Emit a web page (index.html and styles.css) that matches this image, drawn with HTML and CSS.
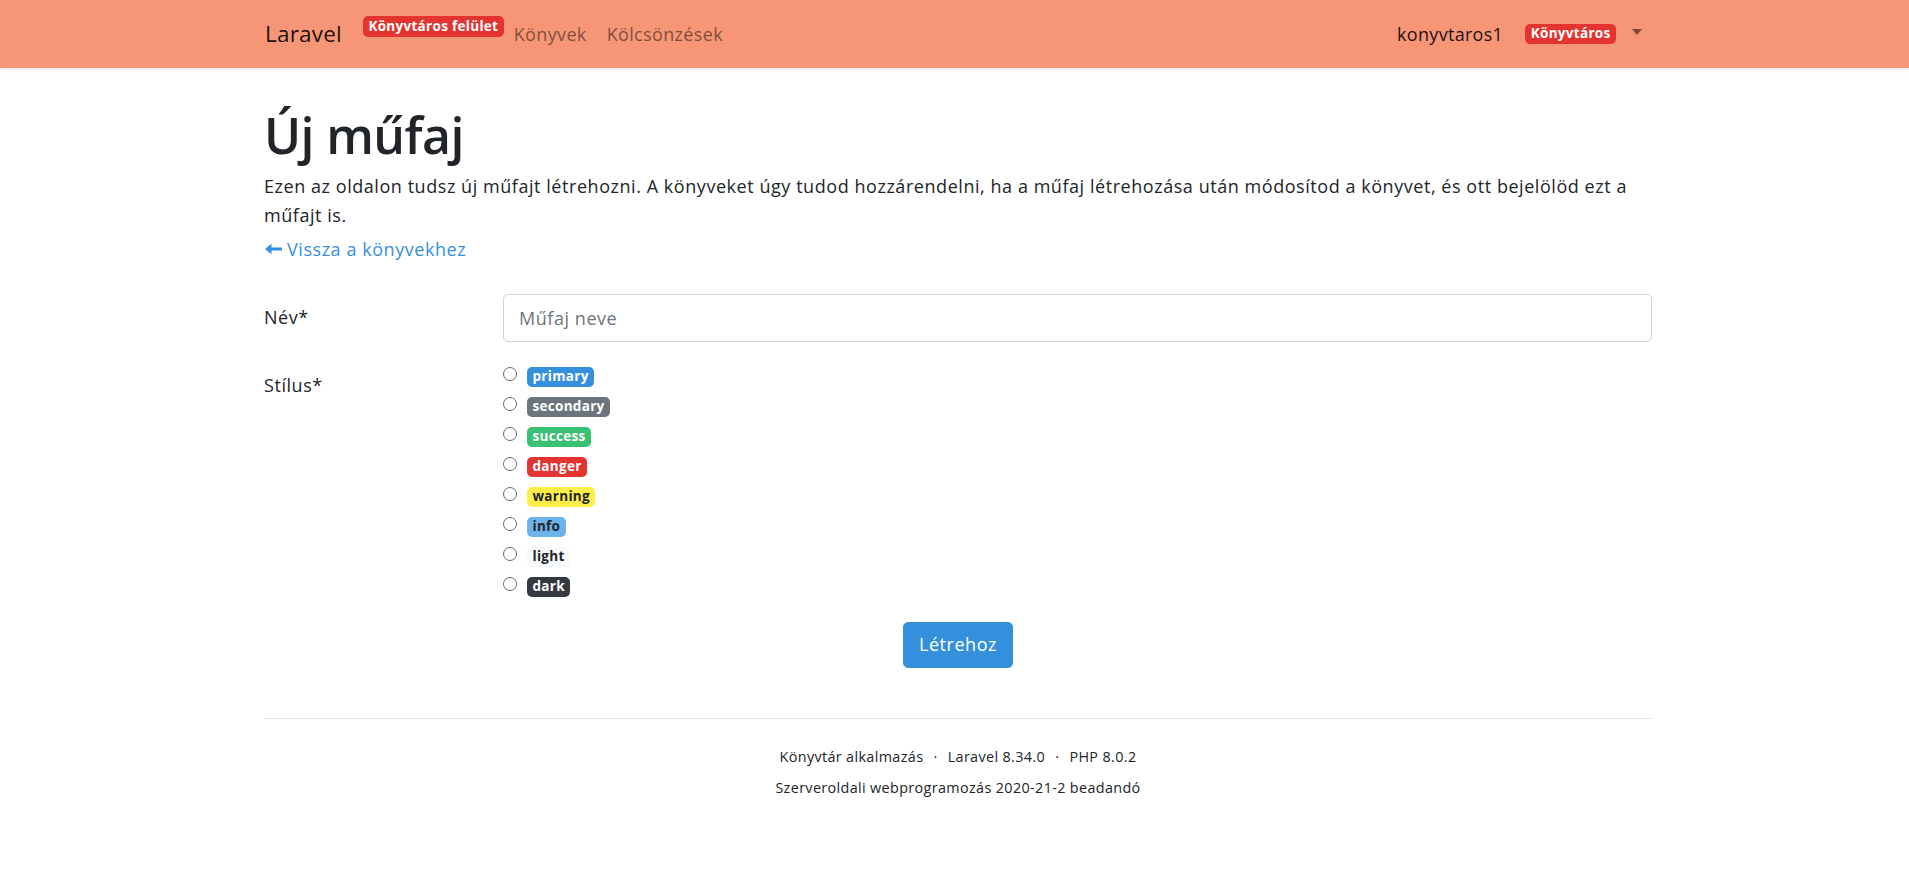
FILE: index.html
```html
<!DOCTYPE html>
<html lang="hu">
<head>
<meta charset="utf-8">
<title>Új műfaj</title>
<link rel="stylesheet" href="styles.css">
</head>
<body>
<nav class="navbar">
  <div class="container nav-inner">
    <a class="brand" href="#">Laravel</a>
    <span class="badge badge-danger nav-badge">Könyvtáros felület</span>
    <a class="nav-link" href="#">Könyvek</a>
    <a class="nav-link" href="#">Kölcsönzések</a>
    <div class="nav-right">
      <a class="nav-link user-link" href="#">konyvtaros1 <span class="badge badge-danger user-badge">Könyvtáros</span><span class="caret"></span></a>
    </div>
  </div>
</nav>
<main class="container main">
  <h1 class="title">Új műfaj</h1>
  <p class="lead-text">Ezen az oldalon tudsz új műfajt létrehozni. A könyveket úgy tudod hozzárendelni, ha a műfaj létrehozása után módosítod a könyvet, és ott bejelölöd ezt a műfajt is.</p>
  <a class="back-link" href="#"><svg class="back-icon" width="17" height="12" viewBox="0 0 17 12" aria-hidden="true"><path d="M0 6 L6.5 0.8 L6.5 4.5 L17 4.5 L17 7.5 L6.5 7.5 L6.5 11.2 Z" fill="#3490dc"/></svg>Vissza a könyvekhez</a>

  <form class="form">
    <div class="form-row">
      <label class="form-label" for="name">Név*</label>
      <input class="form-input" id="name" type="text" placeholder="Műfaj neve">
    </div>
    <div class="form-row">
      <div class="form-label">Stílus*</div>
      <div class="radio-list">
        <label class="radio-item"><input type="radio" name="style"><span class="badge badge-primary">primary</span></label>
        <label class="radio-item"><input type="radio" name="style"><span class="badge badge-secondary">secondary</span></label>
        <label class="radio-item"><input type="radio" name="style"><span class="badge badge-success">success</span></label>
        <label class="radio-item"><input type="radio" name="style"><span class="badge badge-danger">danger</span></label>
        <label class="radio-item"><input type="radio" name="style"><span class="badge badge-warning">warning</span></label>
        <label class="radio-item"><input type="radio" name="style"><span class="badge badge-info">info</span></label>
        <label class="radio-item"><input type="radio" name="style"><span class="badge badge-light">light</span></label>
        <label class="radio-item"><input type="radio" name="style"><span class="badge badge-dark">dark</span></label>
      </div>
    </div>
    <div class="submit-row">
      <button class="btn-primary" type="button">Létrehoz</button>
    </div>
  </form>

  <footer class="footer">
    <div class="footer-line">Könyvtár alkalmazás <span class="dot">·</span> Laravel 8.34.0 <span class="dot">·</span> PHP 8.0.2</div>
    <div class="footer-line">Szerveroldali webprogramozás 2020-21-2 beadandó</div>
  </footer>
</main>
</body>
</html>
```

FILE: styles.css
```css
* { box-sizing: border-box; }
html, body { margin: 0; padding: 0; }
body {
  background: #ffffff;
  color: #212529;
  font-family: "Open Sans", "Noto Sans", sans-serif;
  font-size: 18px;
  line-height: 28.8px;
  letter-spacing: 0.55px;
}
.container {
  width: 1388px;
  margin-left: 264px;
}
a { text-decoration: none; }

/* navbar */
.navbar {
  background: #f79677;
  height: 68px;
  box-shadow: 0 2px 5px rgba(0, 0, 0, 0.08);
}
.nav-inner {
  display: flex;
  align-items: center;
  height: 68px;
}
.brand {
  color: rgba(0, 0, 0, 0.9);
  font-size: 22.5px;
  letter-spacing: 0.2px;
  margin-left: 1px;
  margin-right: 21px;
}
.nav-badge {
  align-self: flex-start;
  margin-top: 16px;
}
.nav-link {
  color: rgba(0, 0, 0, 0.5);
  padding: 0 10px;
  letter-spacing: 0.35px;
}
.nav-right {
  margin-left: auto;
}
.user-link {
  display: flex;
  align-items: center;
  color: rgba(0, 0, 0, 0.9);
  letter-spacing: 0.3px;
}
.user-badge {
  margin-left: 22px;
}
.caret {
  display: inline-block;
  margin-left: 16px;
  width: 0;
  height: 0;
  border-top: 6px solid rgba(0, 0, 0, 0.5);
  border-left: 5.5px solid transparent;
  border-right: 5.5px solid transparent;
  margin-top: -4px;
}

/* badges */
.badge {
  display: inline-block;
  font-size: 13.5px;
  font-weight: 700;
  line-height: 1;
  letter-spacing: 0.3px;
  padding: 3.5px 5.5px;
  border-radius: 5px;
  color: #fff;
  white-space: nowrap;
}
.badge-primary { background: #3490dc; }
.badge-secondary { background: #6c757d; }
.badge-success { background: #38c172; }
.badge-danger { background: #e3342f; }
.badge-warning { background: #ffed4a; color: #212529; }
.badge-info { background: #6cb2eb; color: #212529; }
.badge-light { background: #f8f9fa; color: #212529; }
.badge-dark { background: #343a40; }

/* main */
.main {
  padding-top: 40px;
}
.title {
  margin: 0 0 10px;
  font-size: 50px;
  line-height: 54px;
  font-weight: 600;
  letter-spacing: -0.6px;
}
.lead-text {
  margin: 0 0 5px;
}
.back-link {
  display: flex;
  align-items: center;
  color: #3490dc;
}
.back-icon {
  flex: none;
  margin: 0 5px 0 1px;
}
.form {
  margin-top: 31px;
}
.form-row {
  display: flex;
  margin-bottom: 20px;
}
.form-label {
  width: 239px;
  flex: none;
  padding-top: 9px;
  line-height: 28.8px;
}
.form-input {
  flex: 1;
  height: 47.5px;
  border: 1px solid #ced4da;
  border-radius: 5px;
  padding: 7.5px 15px;
  font: inherit;
  letter-spacing: 0.55px;
  color: #495057;
  background: #fff;
}
.form-input::placeholder { color: #6c757d; }
.radio-list {
  display: flex;
  flex-direction: column;
}
.radio-item {
  display: flex;
  align-items: center;
  height: 30px;
}
.radio-item input {
  appearance: none;
  -webkit-appearance: none;
  width: 14px;
  height: 14px;
  margin: -6px 10px 0 0;
  border: 1px solid #6a6a6a;
  border-radius: 50%;
  background: #fff;
}
.submit-row {
  display: flex;
  justify-content: center;
}
.btn-primary {
  font: inherit;
  letter-spacing: 0.55px;
  color: #fff;
  background: #3490dc;
  border: 1px solid #3490dc;
  border-radius: 5px;
  padding: 7.5px 15px;
  line-height: 28.8px;
}

/* footer */
.footer {
  margin-top: 50px;
  border-top: 1px solid #e3e3e3;
  padding-top: 22px;
  text-align: center;
  font-size: 14.4px;
  line-height: 31px;
  letter-spacing: 0.35px;
}
.dot {
  margin: 0 6px;
}
```
